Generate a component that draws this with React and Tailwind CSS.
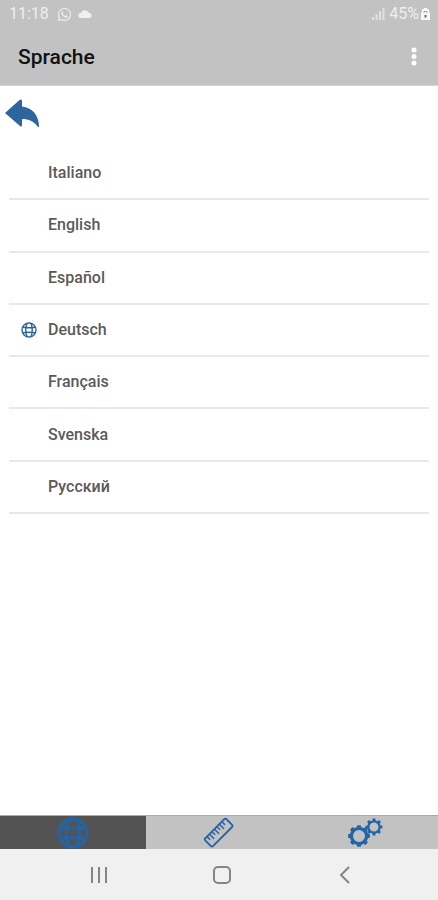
import { useState } from "react";
import { FaWhatsapp } from "react-icons/fa";

const languages = [
  { id: "it", label: "Italiano" },
  { id: "en", label: "English" },
  { id: "es", label: "Español" },
  { id: "de", label: "Deutsch" },
  { id: "fr", label: "Français" },
  { id: "sv", label: "Svenska" },
  { id: "ru", label: "Русский" },
];

// Outline of a gear with square teeth around (cx, cy)
function gearPath(cx, cy, inner, outer, teeth) {
  const step = (Math.PI * 2) / teeth;
  const points = [];
  for (let i = 0; i < teeth; i++) {
    const a = i * step - Math.PI / 2;
    [[-0.3, inner], [-0.2, outer], [0.2, outer], [0.3, inner]].forEach(([t, r]) => {
      points.push(`${(cx + r * Math.cos(a + t * step)).toFixed(2)} ${(cy + r * Math.sin(a + t * step)).toFixed(2)}`);
    });
  }
  return `M${points.join("L")}Z`;
}

function GlobeIcon({ className }) {
  return (
    <svg viewBox="0 0 32 32" fill="none" stroke="currentColor" strokeWidth="2.8" className={className} aria-hidden="true">
      <circle cx="16" cy="16" r="14" />
      <path d="M12.500 2.500C8.500 9 8.500 23 12.500 29.500M19.500 2.500C23.500 9 23.500 23 19.500 29.500" />
      <path d="M3.500 10.500Q16 12.500 28.500 10.500M3.500 21.500Q16 19.500 28.500 21.500" />
    </svg>
  );
}

function RulerIcon() {
  return (
    <svg viewBox="0 0 32 32" fill="none" stroke="currentColor" strokeWidth="1.8" className="size-8" aria-hidden="true">
      <g transform="rotate(-45 16 16)">
        <rect x="1" y="10" width="30" height="11" rx="1.500" />
        <path strokeWidth="1.500" d="M5 10.500v4M8.500 10.500v6M12 10.500v4M15.500 10.500v6M19 10.500v4M22.500 10.500v6M26 10.500v4" />
      </g>
    </svg>
  );
}

function GearsIcon() {
  return (
    <svg viewBox="0 0 36 30" fill="currentColor" fillRule="evenodd" className="h-[30px] w-9" aria-hidden="true">
      <path d={gearPath(12, 18, 9.2, 11, 8) + "M12 12a6 6 0 1 0 0 12a6 6 0 1 0 0-12Z"} />
      <path d={gearPath(27, 9, 6.8, 8.6, 8) + "M27 4.500a4.500 4.500 0 1 0 0 9a4.500 4.500 0 1 0 0-9Z"} />
    </svg>
  );
}

function StatusBar() {
  return (
    <div className="flex h-7 items-center justify-between pr-2 pl-[9px] text-[#efefef]">
      <div className="flex items-center gap-2">
        <span className="text-base leading-5">11:18</span>
        <FaWhatsapp className="size-[15px]" aria-hidden="true" />
        <svg viewBox="0 0 14 10" fill="currentColor" className="-ml-0.5 h-[10px] w-3.5" aria-hidden="true">
          <path d="M3 9a2.500 2.500 0 0 1-.3-5A4.500 4.500 0 0 1 11 4a2.500 2.500 0 0 1 .2 5Z" />
        </svg>
      </div>
      <div className="flex items-center gap-1">
        <svg viewBox="0 0 13 12" fill="currentColor" className="h-3 w-[13px]" aria-hidden="true">
          <path d="M0 9h2v3H0zM3.500 6h2v6h-2zM7 3h2v9H7z" opacity=".7" />
          <path d="M10.500 0h2v12h-2z" opacity=".7" />
        </svg>
        <span className="text-base leading-5">45%</span>
        <svg viewBox="0 0 9 12" className="-ml-0.5 h-3 w-[9px]" aria-hidden="true">
          <path fill="#f8f8f8" d="M3 0h3v1h2v2.500L9 5v7H0V5l1-1.500V1h2z" />
          <path fill="none" stroke="#a5a5a5" d="M3 5V3.500h3V5" />
          <path fill="#666" d="M3.500 7h2v2.500h-2z" />
        </svg>
      </div>
    </div>
  );
}

export default function App() {
  const [language, setLanguage] = useState("de");
  const [tab, setTab] = useState("language");

  const tabs = [
    { id: "language", label: "Sprache", icon: <GlobeIcon className="size-8" /> },
    { id: "units", label: "Einheiten", icon: <RulerIcon /> },
    { id: "settings", label: "Einstellungen", icon: <GearsIcon /> },
  ];

  return (
    <div className="flex min-h-screen flex-col bg-white font-['Roboto',sans-serif]">
      <header className="border-b border-[#d4d4d4] bg-[#c2c2c2]">
        <StatusBar />
        <div className="flex h-[57px] items-center justify-between pr-3 pl-[18px]">
          <h1 className="text-[21px] leading-7 font-medium text-[#111]">Sprache</h1>
          <button type="button" aria-label="Menü" className="flex w-6 justify-center text-white">
            <svg viewBox="0 0 6 20" fill="currentColor" className="h-5 w-1.5" aria-hidden="true">
              <circle cx="3" cy="3" r="2.500" />
              <circle cx="3" cy="9.500" r="2.500" />
              <circle cx="3" cy="16" r="2.500" />
            </svg>
          </button>
        </div>
      </header>

      <main className="flex-1">
        <button type="button" aria-label="Zurück" className="mt-3 ml-1 block text-[#2e659f]">
          <svg viewBox="0 0 36 30" fill="currentColor" className="h-[30px] w-9" aria-hidden="true">
            <path d="M1 15 15.500 2Q18 .5 18 3V8.500C28 9.500 35 17 35 28.500Q34.500 30 33.500 28.500C29.500 23 25 21 18 21V27Q18 29.500 16 28Z" />
          </svg>
        </button>

        {/* Languages */}
        <ul className="mx-[9px] mt-5 flex h-[366px] flex-col">
          {languages.map((item) => (
            <li key={item.id} className="flex-1 border-b-2 border-[#e8e8e8]">
              <button
                type="button"
                aria-pressed={language === item.id}
                className="flex h-full w-full items-center text-left text-base leading-6 font-medium text-[#5a5a5a]"
                onClick={() => setLanguage(item.id)}
              >
                <span className="flex w-[39px] justify-center text-[#2e659f]">
                  {language === item.id && <GlobeIcon className="size-4" />}
                </span>
                {item.label}
              </button>
            </li>
          ))}
        </ul>
      </main>

      {/* Tabs */}
      <nav className="grid h-[34px] grid-cols-3">
        {tabs.map((item) => (
          <button
            key={item.id}
            type="button"
            aria-label={item.label}
            onClick={() => setTab(item.id)}
            className={`flex items-center justify-center border-t border-[#aaa] text-[#2264a5] ${
              tab === item.id ? "bg-[#535353]" : "bg-[#c2c2c2]"
            }`}
          >
            {item.icon}
          </button>
        ))}
      </nav>

      {/* System buttons */}
      <footer className="flex h-[51px] items-center justify-between bg-[#f0f0f0] pr-[81px] pl-[87px] text-[#858585]">
        <button type="button" aria-label="Letzte Apps">
          <svg viewBox="0 0 24 24" fill="none" stroke="currentColor" strokeWidth="2" className="size-6" aria-hidden="true">
            <path d="M5 4v16M12 4v16M19 4v16" />
          </svg>
        </button>
        <button type="button" aria-label="Startseite">
          <svg viewBox="0 0 24 24" fill="none" stroke="currentColor" strokeWidth="2" className="size-6" aria-hidden="true">
            <rect x="4" y="4" width="16" height="16" rx="4" />
          </svg>
        </button>
        <button type="button" aria-label="Zurück">
          <svg viewBox="0 0 24 24" fill="none" stroke="currentColor" strokeWidth="2" className="size-6" aria-hidden="true">
            <path d="m16 4-8 8 8 8" />
          </svg>
        </button>
      </footer>
    </div>
  );
}
